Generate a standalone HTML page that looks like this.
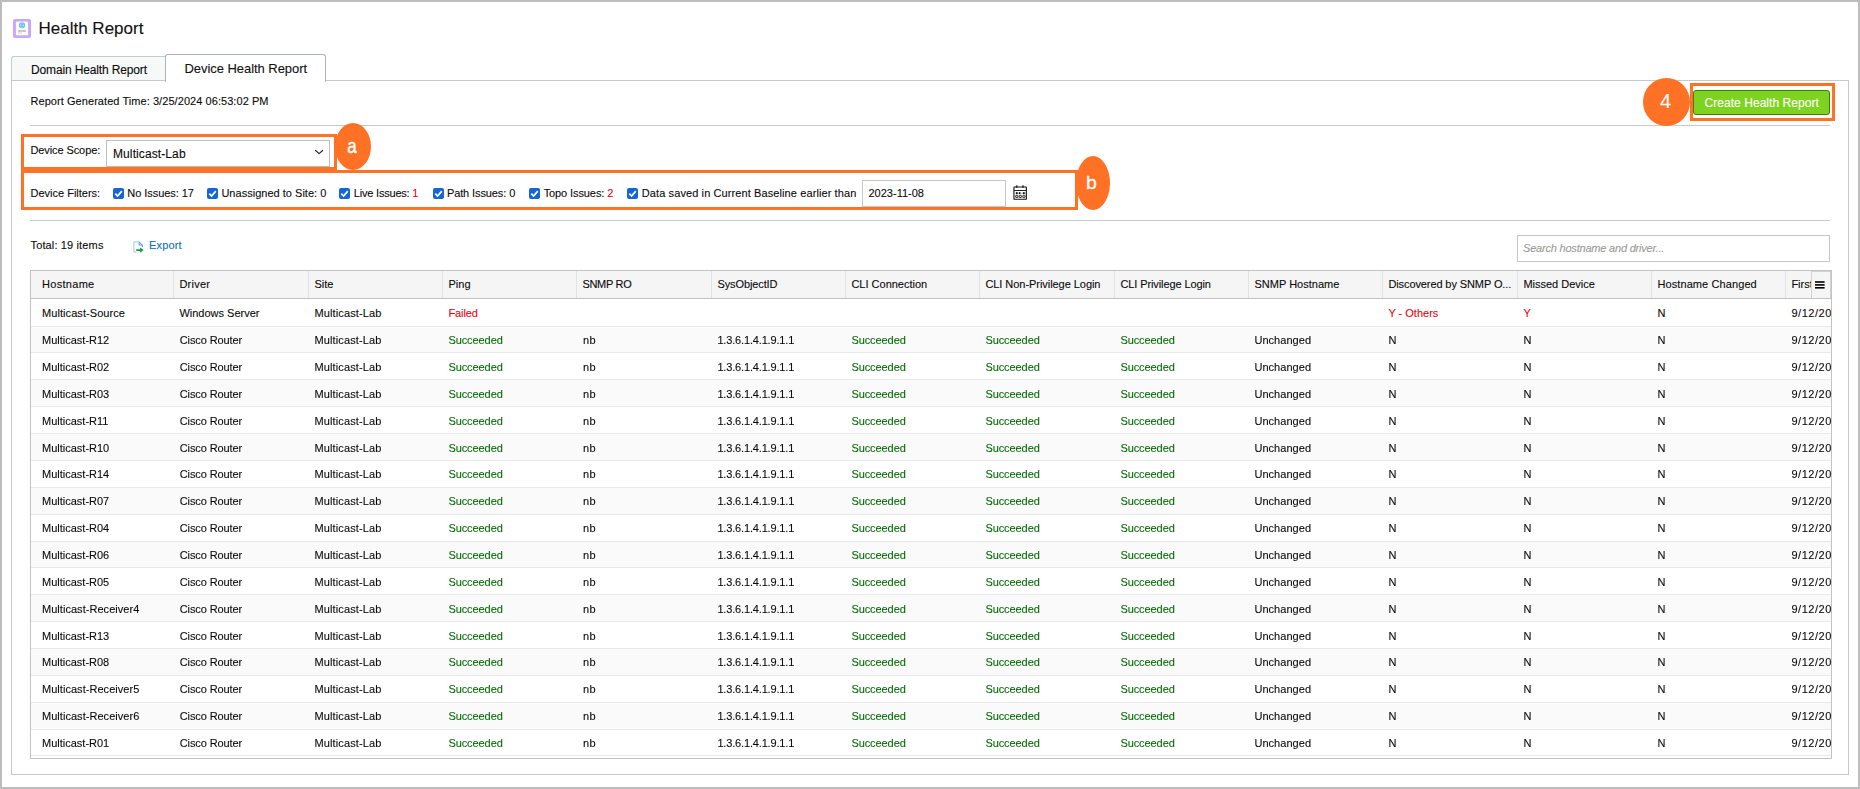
<!DOCTYPE html>
<html lang="en">
<head>
<meta charset="utf-8">
<title>Health Report</title>
<style>
*{box-sizing:border-box}
html,body{margin:0;padding:0}
body{width:1860px;height:789px;background:#fff;position:relative;overflow:hidden;font-family:"Liberation Sans", sans-serif;font-size:11px;color:#0a0a0a;line-height:1;-webkit-text-stroke:0.1px currentColor}
.a{position:absolute}
.frame{left:0;top:0;width:1860px;height:789px;border:2px solid #bdbdbd}
.t{position:absolute;white-space:nowrap;line-height:20px;height:20px}
.title{margin:0;font-weight:normal;left:38.5px;top:17.5px;font-size:17px;line-height:22px;height:22px;color:#111;letter-spacing:0px}
.tab1{left:11px;top:56px;width:155px;height:24px;border:1px solid #c6cacd;border-bottom:none;border-right:none;border-radius:3px 0 0 0;background:#f7f8f8}
.tab2{left:165px;top:54px;width:161px;height:28px;border:1px solid #adb3b8;border-bottom:none;border-radius:3px 3px 0 0;background:#fff;z-index:3}
.panel{left:11px;top:80px;width:1838px;height:695px;border:1px solid #c8c8c8;background:#fff}
.hr{height:1px;background:#c9c9c9;left:30px;width:1800px}
.obox{border:3px solid #ff7124}
.badge{background:#ff7124;border-radius:50%;color:#fff;text-align:center}
.sel{left:106px;top:140px;width:224px;height:27px;border:1px solid #bdbdbd;background:#fff}
.cb{width:11px;height:11px;border-radius:2px;background:#1565d8;top:188px}
.cb svg{position:absolute;left:0;top:0}
.btn{left:1693px;top:90px;width:137px;height:25px;background:#7ed321;border:1px solid #437d06;border-radius:3px}
.bl{color:#fff;text-align:center;z-index:6;transform-origin:50% 50%}
.gs{will-change:transform}
.inp{border:1px solid #c6c6c6;background:#fff}
.tbl{left:30px;top:270px;width:1802px;height:489px;border:1px solid #c2c2c2;overflow:hidden;background:#fff}
.th{left:0;top:0;width:1800px;height:28px;background:#f5f5f5;border-bottom:1px solid #c4c4c4}
.sep{top:0;width:1px;height:27px;background:#e2e2e2}
.row{left:0;width:1800px;border-bottom:1px solid #e9e9e9}
.row.alt{background:#fafafa}
.c{position:absolute;white-space:nowrap;font-size:11px}
.g{color:#066c06}
.r{color:#e40512}
</style>
</head>
<body>
<div class="a frame"></div>
<svg class="a" style="left:13px;top:19px" width="18" height="19" viewBox="0 0 18 19">
<rect x="0" y="0" width="18" height="18.9" rx="2" fill="#cba7f8"/>
<rect x="2.9" y="2.6" width="12.2" height="13.7" rx="1.1" fill="#fff"/>
<circle cx="9" cy="6.3" r="3.05" fill="#52b5ea"/>
<ellipse cx="9" cy="6.3" rx="1.3" ry="2.9" fill="none" stroke="#bfe4f8" stroke-width="0.7"/>
<path d="M6.1 6.3 H11.9" stroke="#bfe4f8" stroke-width="0.6"/>
<rect x="5" y="11.1" width="8" height="1.9" fill="#c6c6c6"/>
<rect x="5" y="13.5" width="3.8" height="1.1" fill="#d4d4d4"/>
</svg>
<h1 class="t title">Health Report</h1>
<div class="a panel"></div>
<div class="a tab1"></div>
<div class="a tab2"></div>
<div class="t" style="left:31px;top:59.5px;font-size:12px;letter-spacing:-0.14px">Domain Health Report</div>
<div class="t" style="left:184.5px;top:59px;font-size:13px;letter-spacing:-0.05px;z-index:4;color:#111">Device Health Report</div>
<div class="t" style="left:30.5px;top:91px;letter-spacing:0.06px">Report Generated Time: 3/25/2024 06:53:02 PM</div>
<div class="a badge" style="left:1643px;top:78px;width:47px;height:48px;z-index:5"></div>
<div class="a bl" style="left:1642px;top:78px;width:47px;height:46px;font-size:20px;line-height:46px">4</div>
<div class="a obox" style="left:1690px;top:83px;width:145px;height:38px"></div>
<div class="a btn"></div>
<div class="t" style="left:1704.5px;top:92.5px;font-size:12px;color:#fff;letter-spacing:0.05px">Create Health Report</div>
<div class="a hr" style="top:125px"></div>
<div class="a obox" style="left:21px;top:134px;width:316px;height:36px"></div>
<div class="t" style="left:30.5px;top:140px;letter-spacing:-0.1px">Device Scope:</div>
<div class="a sel"></div>
<div class="t" style="left:113px;top:143.5px;font-size:12px;letter-spacing:0.1px">Multicast-Lab</div>
<svg class="a" style="left:314px;top:149px" width="11" height="8" viewBox="0 0 11 8"><path d="M1.6 1.5 L5.1 4.6 L8.6 1.5" fill="none" stroke="#2a2a2a" stroke-width="1.2" stroke-linejoin="round" stroke-linecap="round"/></svg>
<div class="a badge" style="left:335px;top:123px;width:36px;height:47px;z-index:5"></div>
<div class="a bl" style="left:336px;top:123px;width:32px;height:47px;font-size:17px;line-height:47px;transform:scaleY(1.22);-webkit-text-stroke:0.35px #fff">a</div>
<div class="a obox" style="left:21px;top:170px;width:1057px;height:40px"></div>
<div class="t" style="left:30.5px;top:183px;">Device Filters:</div>
<div class="a cb" style="left:113px"><svg width="11" height="11" viewBox="0 0 11 11"><path d="M2.3 5.7 L4.6 8 L8.8 3.1" fill="none" stroke="#fff" stroke-width="1.7"/></svg></div>
<div class="t" style="left:127.3px;top:183px;letter-spacing:-0.05px">No Issues: 17</div>
<div class="a cb" style="left:207px"><svg width="11" height="11" viewBox="0 0 11 11"><path d="M2.3 5.7 L4.6 8 L8.8 3.1" fill="none" stroke="#fff" stroke-width="1.7"/></svg></div>
<div class="t" style="left:221.4px;top:183px;letter-spacing:0.02px">Unassigned to Site: 0</div>
<div class="a cb" style="left:339px"><svg width="11" height="11" viewBox="0 0 11 11"><path d="M2.3 5.7 L4.6 8 L8.8 3.1" fill="none" stroke="#fff" stroke-width="1.7"/></svg></div>
<div class="t" style="left:353.8px;top:183px;letter-spacing:-0.2px">Live Issues: <span class="r">1</span></div>
<div class="a cb" style="left:433px"><svg width="11" height="11" viewBox="0 0 11 11"><path d="M2.3 5.7 L4.6 8 L8.8 3.1" fill="none" stroke="#fff" stroke-width="1.7"/></svg></div>
<div class="t" style="left:446.9px;top:183px;letter-spacing:-0.1px">Path Issues: 0</div>
<div class="a cb" style="left:529px"><svg width="11" height="11" viewBox="0 0 11 11"><path d="M2.3 5.7 L4.6 8 L8.8 3.1" fill="none" stroke="#fff" stroke-width="1.7"/></svg></div>
<div class="t" style="left:543.7px;top:183px;letter-spacing:-0.1px">Topo Issues: <span class="r">2</span></div>
<div class="a cb" style="left:627px"><svg width="11" height="11" viewBox="0 0 11 11"><path d="M2.3 5.7 L4.6 8 L8.8 3.1" fill="none" stroke="#fff" stroke-width="1.7"/></svg></div>
<div class="t" style="left:641.8px;top:183px;letter-spacing:0.1px">Data saved in Current Baseline earlier than</div>
<div class="a inp" style="left:862px;top:180px;width:144px;height:27px"></div>
<div class="t" style="left:868.5px;top:183px">2023-11-08</div>
<svg class="a" style="left:1012.5px;top:184.6px" width="16" height="16" viewBox="0 0 16 16">
<rect x="0.95" y="2" width="12.4" height="12.3" rx="0.4" fill="#fff" stroke="#111" stroke-width="1.1"/>
<path d="M0.95 5.5 H13.3" stroke="#222" stroke-width="1"/>
<path d="M3.8 0.3 V2.8 M10 0.3 V2.8" stroke="#111" stroke-width="1.2"/>
<path d="M1.5 8.2 H12.8" stroke="#999" stroke-width="0.8"/>
<g fill="#111"><rect x="3" y="7.2" width="1.7" height="1.9"/><rect x="5.9" y="7.2" width="1.5" height="1.9"/><rect x="10" y="7.2" width="1.7" height="1.9"/></g>
<g fill="none" stroke="#111" stroke-width="0.9"><rect x="2.7" y="10.4" width="2.2" height="2.1" rx="0.4"/><rect x="6.1" y="10.4" width="2.2" height="2.1" rx="0.4"/><rect x="9.8" y="10.4" width="2.2" height="2.1" rx="0.4"/></g>
</svg>
<div class="a badge" style="left:1076px;top:156px;width:34px;height:54px;z-index:5"></div>
<div class="a bl" style="left:1076px;top:156px;width:31px;height:55px;font-size:18px;line-height:55px;transform:scaleX(1.08);-webkit-text-stroke:0.3px #fff">b</div>
<div class="a hr" style="top:220px"></div>
<div class="t" style="left:30.5px;top:235px;letter-spacing:0.14px">Total: 19 items</div>
<svg class="a" style="left:132.5px;top:240.5px" width="12" height="12" viewBox="0 0 12 12">
<path d="M0.9 0.9 V11 H3.4 M0.9 0.9 H6.2" fill="none" stroke="#9ccaf0" stroke-width="1"/>
<path d="M6.2 0.9 V4 H9.3 M6.2 0.9 L9.3 4 V6.2" fill="none" stroke="#4a96dc" stroke-width="1"/>
<path d="M3.2 8.3 H7 V6.4 L10.7 9.1 L7 11.8 V9.9 H3.2 Z" fill="#14a04c"/>
</svg>
<div class="t" style="left:149px;top:235px;color:#0e6fb2;letter-spacing:0.15px">Export</div>
<div class="a inp" style="left:1517px;top:235px;width:313px;height:27px"></div>
<div class="t" style="left:1523px;top:238px;font-style:italic;color:#9a9a9a;letter-spacing:-0.2px">Search hostname and driver...</div>
<div class="a tbl">
<div class="a th"></div>
<div class="c" style="left:11.0px;top:3px;line-height:20px;letter-spacing:0.3px">Hostname</div>
<div class="a sep" style="left:142px"></div><div class="c" style="left:148.4px;top:3px;line-height:20px;letter-spacing:0.25px">Driver</div>
<div class="a sep" style="left:277px"></div><div class="c" style="left:283.4px;top:3px;line-height:20px;letter-spacing:0px">Site</div>
<div class="a sep" style="left:411px"></div><div class="c" style="left:417.4px;top:3px;line-height:20px;letter-spacing:0.05px">Ping</div>
<div class="a sep" style="left:545px"></div><div class="c" style="left:551.4px;top:3px;line-height:20px;letter-spacing:-0.3px">SNMP RO</div>
<div class="a sep" style="left:680px"></div><div class="c" style="left:686.4px;top:3px;line-height:20px;letter-spacing:-0.1px">SysObjectID</div>
<div class="a sep" style="left:814px"></div><div class="c" style="left:820.4px;top:3px;line-height:20px;letter-spacing:0px">CLI Connection</div>
<div class="a sep" style="left:948px"></div><div class="c" style="left:954.4px;top:3px;line-height:20px;letter-spacing:-0.05px">CLI Non-Privilege Login</div>
<div class="a sep" style="left:1083px"></div><div class="c" style="left:1089.4px;top:3px;line-height:20px;letter-spacing:-0.1px">CLI Privilege Login</div>
<div class="a sep" style="left:1217px"></div><div class="c" style="left:1223.4px;top:3px;line-height:20px;letter-spacing:0.02px">SNMP Hostname</div>
<div class="a sep" style="left:1351px"></div><div class="c" style="left:1357.4px;top:3px;line-height:20px;letter-spacing:-0.1px">Discovered by SNMP O...</div>
<div class="a sep" style="left:1486px"></div><div class="c" style="left:1492.4px;top:3px;line-height:20px;letter-spacing:0px">Missed Device</div>
<div class="a sep" style="left:1620px"></div><div class="c" style="left:1626.4px;top:3px;line-height:20px;letter-spacing:0.1px">Hostname Changed</div>
<div class="a sep" style="left:1754px"></div><div class="c" style="left:1760.4px;top:3px;line-height:20px;letter-spacing:0px">First</div>
<div class="a row" style="top:28px;height:28px"><div class="c " style="left:11.0px;top:4px;line-height:20px;letter-spacing:0.07px">Multicast-Source</div><div class="c " style="left:148.4px;top:4px;line-height:20px;letter-spacing:0px">Windows Server</div><div class="c " style="left:283.4px;top:4px;line-height:20px;letter-spacing:0.14px">Multicast-Lab</div><div class="c r" style="left:417.4px;top:4px;line-height:20px;letter-spacing:-0.08px">Failed</div><div class="c r" style="left:1357.4px;top:4px;line-height:20px;letter-spacing:0px">Y - Others</div><div class="c r" style="left:1492.4px;top:4px;line-height:20px;letter-spacing:0px">Y</div><div class="c " style="left:1626.4px;top:4px;line-height:20px;letter-spacing:0px">N</div><div class="c " style="left:1760.4px;top:4px;line-height:20px;letter-spacing:0.55px">9/12/2023</div></div>
<div class="a row alt gs" style="top:56px;height:26px"><div class="c " style="left:11.0px;top:3px;line-height:20px;letter-spacing:0px">Multicast-R12</div><div class="c " style="left:148.7px;top:3px;line-height:20px;letter-spacing:-0.1px">Cisco Router</div><div class="c " style="left:283.4px;top:3px;line-height:20px;letter-spacing:0.14px">Multicast-Lab</div><div class="c g" style="left:417.4px;top:3px;line-height:20px;letter-spacing:-0.08px">Succeeded</div><div class="c " style="left:552.1px;top:3px;line-height:20px;letter-spacing:0.4px">nb</div><div class="c " style="left:686.4px;top:3px;line-height:20px;letter-spacing:-0.16px">1.3.6.1.4.1.9.1.1</div><div class="c g" style="left:820.4px;top:3px;line-height:20px;letter-spacing:-0.08px">Succeeded</div><div class="c g" style="left:954.4px;top:3px;line-height:20px;letter-spacing:-0.08px">Succeeded</div><div class="c g" style="left:1089.4px;top:3px;line-height:20px;letter-spacing:-0.08px">Succeeded</div><div class="c " style="left:1223.4px;top:3px;line-height:20px;letter-spacing:0.05px">Unchanged</div><div class="c " style="left:1357.4px;top:3px;line-height:20px;letter-spacing:0px">N</div><div class="c " style="left:1492.4px;top:3px;line-height:20px;letter-spacing:0px">N</div><div class="c " style="left:1626.4px;top:3px;line-height:20px;letter-spacing:0px">N</div><div class="c " style="left:1760.4px;top:3px;line-height:20px;letter-spacing:0.55px">9/12/2023</div></div>
<div class="a row gs" style="top:82px;height:27px"><div class="c " style="left:11.0px;top:4px;line-height:20px;letter-spacing:0px">Multicast-R02</div><div class="c " style="left:148.7px;top:4px;line-height:20px;letter-spacing:-0.1px">Cisco Router</div><div class="c " style="left:283.4px;top:4px;line-height:20px;letter-spacing:0.14px">Multicast-Lab</div><div class="c g" style="left:417.4px;top:4px;line-height:20px;letter-spacing:-0.08px">Succeeded</div><div class="c " style="left:552.1px;top:4px;line-height:20px;letter-spacing:0.4px">nb</div><div class="c " style="left:686.4px;top:4px;line-height:20px;letter-spacing:-0.16px">1.3.6.1.4.1.9.1.1</div><div class="c g" style="left:820.4px;top:4px;line-height:20px;letter-spacing:-0.08px">Succeeded</div><div class="c g" style="left:954.4px;top:4px;line-height:20px;letter-spacing:-0.08px">Succeeded</div><div class="c g" style="left:1089.4px;top:4px;line-height:20px;letter-spacing:-0.08px">Succeeded</div><div class="c " style="left:1223.4px;top:4px;line-height:20px;letter-spacing:0.05px">Unchanged</div><div class="c " style="left:1357.4px;top:4px;line-height:20px;letter-spacing:0px">N</div><div class="c " style="left:1492.4px;top:4px;line-height:20px;letter-spacing:0px">N</div><div class="c " style="left:1626.4px;top:4px;line-height:20px;letter-spacing:0px">N</div><div class="c " style="left:1760.4px;top:4px;line-height:20px;letter-spacing:0.55px">9/12/2023</div></div>
<div class="a row alt gs" style="top:109px;height:27px"><div class="c " style="left:11.0px;top:4px;line-height:20px;letter-spacing:0px">Multicast-R03</div><div class="c " style="left:148.7px;top:4px;line-height:20px;letter-spacing:-0.1px">Cisco Router</div><div class="c " style="left:283.4px;top:4px;line-height:20px;letter-spacing:0.14px">Multicast-Lab</div><div class="c g" style="left:417.4px;top:4px;line-height:20px;letter-spacing:-0.08px">Succeeded</div><div class="c " style="left:552.1px;top:4px;line-height:20px;letter-spacing:0.4px">nb</div><div class="c " style="left:686.4px;top:4px;line-height:20px;letter-spacing:-0.16px">1.3.6.1.4.1.9.1.1</div><div class="c g" style="left:820.4px;top:4px;line-height:20px;letter-spacing:-0.08px">Succeeded</div><div class="c g" style="left:954.4px;top:4px;line-height:20px;letter-spacing:-0.08px">Succeeded</div><div class="c g" style="left:1089.4px;top:4px;line-height:20px;letter-spacing:-0.08px">Succeeded</div><div class="c " style="left:1223.4px;top:4px;line-height:20px;letter-spacing:0.05px">Unchanged</div><div class="c " style="left:1357.4px;top:4px;line-height:20px;letter-spacing:0px">N</div><div class="c " style="left:1492.4px;top:4px;line-height:20px;letter-spacing:0px">N</div><div class="c " style="left:1626.4px;top:4px;line-height:20px;letter-spacing:0px">N</div><div class="c " style="left:1760.4px;top:4px;line-height:20px;letter-spacing:0.55px">9/12/2023</div></div>
<div class="a row gs" style="top:136px;height:27px"><div class="c " style="left:11.0px;top:4px;line-height:20px;letter-spacing:0px">Multicast-R11</div><div class="c " style="left:148.7px;top:4px;line-height:20px;letter-spacing:-0.1px">Cisco Router</div><div class="c " style="left:283.4px;top:4px;line-height:20px;letter-spacing:0.14px">Multicast-Lab</div><div class="c g" style="left:417.4px;top:4px;line-height:20px;letter-spacing:-0.08px">Succeeded</div><div class="c " style="left:552.1px;top:4px;line-height:20px;letter-spacing:0.4px">nb</div><div class="c " style="left:686.4px;top:4px;line-height:20px;letter-spacing:-0.16px">1.3.6.1.4.1.9.1.1</div><div class="c g" style="left:820.4px;top:4px;line-height:20px;letter-spacing:-0.08px">Succeeded</div><div class="c g" style="left:954.4px;top:4px;line-height:20px;letter-spacing:-0.08px">Succeeded</div><div class="c g" style="left:1089.4px;top:4px;line-height:20px;letter-spacing:-0.08px">Succeeded</div><div class="c " style="left:1223.4px;top:4px;line-height:20px;letter-spacing:0.05px">Unchanged</div><div class="c " style="left:1357.4px;top:4px;line-height:20px;letter-spacing:0px">N</div><div class="c " style="left:1492.4px;top:4px;line-height:20px;letter-spacing:0px">N</div><div class="c " style="left:1626.4px;top:4px;line-height:20px;letter-spacing:0px">N</div><div class="c " style="left:1760.4px;top:4px;line-height:20px;letter-spacing:0.55px">9/12/2023</div></div>
<div class="a row alt gs" style="top:163px;height:27px"><div class="c " style="left:11.0px;top:4px;line-height:20px;letter-spacing:0px">Multicast-R10</div><div class="c " style="left:148.7px;top:4px;line-height:20px;letter-spacing:-0.1px">Cisco Router</div><div class="c " style="left:283.4px;top:4px;line-height:20px;letter-spacing:0.14px">Multicast-Lab</div><div class="c g" style="left:417.4px;top:4px;line-height:20px;letter-spacing:-0.08px">Succeeded</div><div class="c " style="left:552.1px;top:4px;line-height:20px;letter-spacing:0.4px">nb</div><div class="c " style="left:686.4px;top:4px;line-height:20px;letter-spacing:-0.16px">1.3.6.1.4.1.9.1.1</div><div class="c g" style="left:820.4px;top:4px;line-height:20px;letter-spacing:-0.08px">Succeeded</div><div class="c g" style="left:954.4px;top:4px;line-height:20px;letter-spacing:-0.08px">Succeeded</div><div class="c g" style="left:1089.4px;top:4px;line-height:20px;letter-spacing:-0.08px">Succeeded</div><div class="c " style="left:1223.4px;top:4px;line-height:20px;letter-spacing:0.05px">Unchanged</div><div class="c " style="left:1357.4px;top:4px;line-height:20px;letter-spacing:0px">N</div><div class="c " style="left:1492.4px;top:4px;line-height:20px;letter-spacing:0px">N</div><div class="c " style="left:1626.4px;top:4px;line-height:20px;letter-spacing:0px">N</div><div class="c " style="left:1760.4px;top:4px;line-height:20px;letter-spacing:0.55px">9/12/2023</div></div>
<div class="a row gs" style="top:190px;height:27px"><div class="c " style="left:11.0px;top:3px;line-height:20px;letter-spacing:0px">Multicast-R14</div><div class="c " style="left:148.7px;top:3px;line-height:20px;letter-spacing:-0.1px">Cisco Router</div><div class="c " style="left:283.4px;top:3px;line-height:20px;letter-spacing:0.14px">Multicast-Lab</div><div class="c g" style="left:417.4px;top:3px;line-height:20px;letter-spacing:-0.08px">Succeeded</div><div class="c " style="left:552.1px;top:3px;line-height:20px;letter-spacing:0.4px">nb</div><div class="c " style="left:686.4px;top:3px;line-height:20px;letter-spacing:-0.16px">1.3.6.1.4.1.9.1.1</div><div class="c g" style="left:820.4px;top:3px;line-height:20px;letter-spacing:-0.08px">Succeeded</div><div class="c g" style="left:954.4px;top:3px;line-height:20px;letter-spacing:-0.08px">Succeeded</div><div class="c g" style="left:1089.4px;top:3px;line-height:20px;letter-spacing:-0.08px">Succeeded</div><div class="c " style="left:1223.4px;top:3px;line-height:20px;letter-spacing:0.05px">Unchanged</div><div class="c " style="left:1357.4px;top:3px;line-height:20px;letter-spacing:0px">N</div><div class="c " style="left:1492.4px;top:3px;line-height:20px;letter-spacing:0px">N</div><div class="c " style="left:1626.4px;top:3px;line-height:20px;letter-spacing:0px">N</div><div class="c " style="left:1760.4px;top:3px;line-height:20px;letter-spacing:0.55px">9/12/2023</div></div>
<div class="a row alt gs" style="top:217px;height:27px"><div class="c " style="left:11.0px;top:3px;line-height:20px;letter-spacing:0px">Multicast-R07</div><div class="c " style="left:148.7px;top:3px;line-height:20px;letter-spacing:-0.1px">Cisco Router</div><div class="c " style="left:283.4px;top:3px;line-height:20px;letter-spacing:0.14px">Multicast-Lab</div><div class="c g" style="left:417.4px;top:3px;line-height:20px;letter-spacing:-0.08px">Succeeded</div><div class="c " style="left:552.1px;top:3px;line-height:20px;letter-spacing:0.4px">nb</div><div class="c " style="left:686.4px;top:3px;line-height:20px;letter-spacing:-0.16px">1.3.6.1.4.1.9.1.1</div><div class="c g" style="left:820.4px;top:3px;line-height:20px;letter-spacing:-0.08px">Succeeded</div><div class="c g" style="left:954.4px;top:3px;line-height:20px;letter-spacing:-0.08px">Succeeded</div><div class="c g" style="left:1089.4px;top:3px;line-height:20px;letter-spacing:-0.08px">Succeeded</div><div class="c " style="left:1223.4px;top:3px;line-height:20px;letter-spacing:0.05px">Unchanged</div><div class="c " style="left:1357.4px;top:3px;line-height:20px;letter-spacing:0px">N</div><div class="c " style="left:1492.4px;top:3px;line-height:20px;letter-spacing:0px">N</div><div class="c " style="left:1626.4px;top:3px;line-height:20px;letter-spacing:0px">N</div><div class="c " style="left:1760.4px;top:3px;line-height:20px;letter-spacing:0.55px">9/12/2023</div></div>
<div class="a row gs" style="top:244px;height:27px"><div class="c " style="left:11.0px;top:3px;line-height:20px;letter-spacing:0px">Multicast-R04</div><div class="c " style="left:148.7px;top:3px;line-height:20px;letter-spacing:-0.1px">Cisco Router</div><div class="c " style="left:283.4px;top:3px;line-height:20px;letter-spacing:0.14px">Multicast-Lab</div><div class="c g" style="left:417.4px;top:3px;line-height:20px;letter-spacing:-0.08px">Succeeded</div><div class="c " style="left:552.1px;top:3px;line-height:20px;letter-spacing:0.4px">nb</div><div class="c " style="left:686.4px;top:3px;line-height:20px;letter-spacing:-0.16px">1.3.6.1.4.1.9.1.1</div><div class="c g" style="left:820.4px;top:3px;line-height:20px;letter-spacing:-0.08px">Succeeded</div><div class="c g" style="left:954.4px;top:3px;line-height:20px;letter-spacing:-0.08px">Succeeded</div><div class="c g" style="left:1089.4px;top:3px;line-height:20px;letter-spacing:-0.08px">Succeeded</div><div class="c " style="left:1223.4px;top:3px;line-height:20px;letter-spacing:0.05px">Unchanged</div><div class="c " style="left:1357.4px;top:3px;line-height:20px;letter-spacing:0px">N</div><div class="c " style="left:1492.4px;top:3px;line-height:20px;letter-spacing:0px">N</div><div class="c " style="left:1626.4px;top:3px;line-height:20px;letter-spacing:0px">N</div><div class="c " style="left:1760.4px;top:3px;line-height:20px;letter-spacing:0.55px">9/12/2023</div></div>
<div class="a row alt gs" style="top:271px;height:26px"><div class="c " style="left:11.0px;top:3px;line-height:20px;letter-spacing:0px">Multicast-R06</div><div class="c " style="left:148.7px;top:3px;line-height:20px;letter-spacing:-0.1px">Cisco Router</div><div class="c " style="left:283.4px;top:3px;line-height:20px;letter-spacing:0.14px">Multicast-Lab</div><div class="c g" style="left:417.4px;top:3px;line-height:20px;letter-spacing:-0.08px">Succeeded</div><div class="c " style="left:552.1px;top:3px;line-height:20px;letter-spacing:0.4px">nb</div><div class="c " style="left:686.4px;top:3px;line-height:20px;letter-spacing:-0.16px">1.3.6.1.4.1.9.1.1</div><div class="c g" style="left:820.4px;top:3px;line-height:20px;letter-spacing:-0.08px">Succeeded</div><div class="c g" style="left:954.4px;top:3px;line-height:20px;letter-spacing:-0.08px">Succeeded</div><div class="c g" style="left:1089.4px;top:3px;line-height:20px;letter-spacing:-0.08px">Succeeded</div><div class="c " style="left:1223.4px;top:3px;line-height:20px;letter-spacing:0.05px">Unchanged</div><div class="c " style="left:1357.4px;top:3px;line-height:20px;letter-spacing:0px">N</div><div class="c " style="left:1492.4px;top:3px;line-height:20px;letter-spacing:0px">N</div><div class="c " style="left:1626.4px;top:3px;line-height:20px;letter-spacing:0px">N</div><div class="c " style="left:1760.4px;top:3px;line-height:20px;letter-spacing:0.55px">9/12/2023</div></div>
<div class="a row gs" style="top:297px;height:27px"><div class="c " style="left:11.0px;top:4px;line-height:20px;letter-spacing:0px">Multicast-R05</div><div class="c " style="left:148.7px;top:4px;line-height:20px;letter-spacing:-0.1px">Cisco Router</div><div class="c " style="left:283.4px;top:4px;line-height:20px;letter-spacing:0.14px">Multicast-Lab</div><div class="c g" style="left:417.4px;top:4px;line-height:20px;letter-spacing:-0.08px">Succeeded</div><div class="c " style="left:552.1px;top:4px;line-height:20px;letter-spacing:0.4px">nb</div><div class="c " style="left:686.4px;top:4px;line-height:20px;letter-spacing:-0.16px">1.3.6.1.4.1.9.1.1</div><div class="c g" style="left:820.4px;top:4px;line-height:20px;letter-spacing:-0.08px">Succeeded</div><div class="c g" style="left:954.4px;top:4px;line-height:20px;letter-spacing:-0.08px">Succeeded</div><div class="c g" style="left:1089.4px;top:4px;line-height:20px;letter-spacing:-0.08px">Succeeded</div><div class="c " style="left:1223.4px;top:4px;line-height:20px;letter-spacing:0.05px">Unchanged</div><div class="c " style="left:1357.4px;top:4px;line-height:20px;letter-spacing:0px">N</div><div class="c " style="left:1492.4px;top:4px;line-height:20px;letter-spacing:0px">N</div><div class="c " style="left:1626.4px;top:4px;line-height:20px;letter-spacing:0px">N</div><div class="c " style="left:1760.4px;top:4px;line-height:20px;letter-spacing:0.55px">9/12/2023</div></div>
<div class="a row alt gs" style="top:324px;height:27px"><div class="c " style="left:11.0px;top:4px;line-height:20px;letter-spacing:0.04px">Multicast-Receiver4</div><div class="c " style="left:148.7px;top:4px;line-height:20px;letter-spacing:-0.1px">Cisco Router</div><div class="c " style="left:283.4px;top:4px;line-height:20px;letter-spacing:0.14px">Multicast-Lab</div><div class="c g" style="left:417.4px;top:4px;line-height:20px;letter-spacing:-0.08px">Succeeded</div><div class="c " style="left:552.1px;top:4px;line-height:20px;letter-spacing:0.4px">nb</div><div class="c " style="left:686.4px;top:4px;line-height:20px;letter-spacing:-0.16px">1.3.6.1.4.1.9.1.1</div><div class="c g" style="left:820.4px;top:4px;line-height:20px;letter-spacing:-0.08px">Succeeded</div><div class="c g" style="left:954.4px;top:4px;line-height:20px;letter-spacing:-0.08px">Succeeded</div><div class="c g" style="left:1089.4px;top:4px;line-height:20px;letter-spacing:-0.08px">Succeeded</div><div class="c " style="left:1223.4px;top:4px;line-height:20px;letter-spacing:0.05px">Unchanged</div><div class="c " style="left:1357.4px;top:4px;line-height:20px;letter-spacing:0px">N</div><div class="c " style="left:1492.4px;top:4px;line-height:20px;letter-spacing:0px">N</div><div class="c " style="left:1626.4px;top:4px;line-height:20px;letter-spacing:0px">N</div><div class="c " style="left:1760.4px;top:4px;line-height:20px;letter-spacing:0.55px">9/12/2023</div></div>
<div class="a row gs" style="top:351px;height:27px"><div class="c " style="left:11.0px;top:4px;line-height:20px;letter-spacing:0px">Multicast-R13</div><div class="c " style="left:148.7px;top:4px;line-height:20px;letter-spacing:-0.1px">Cisco Router</div><div class="c " style="left:283.4px;top:4px;line-height:20px;letter-spacing:0.14px">Multicast-Lab</div><div class="c g" style="left:417.4px;top:4px;line-height:20px;letter-spacing:-0.08px">Succeeded</div><div class="c " style="left:552.1px;top:4px;line-height:20px;letter-spacing:0.4px">nb</div><div class="c " style="left:686.4px;top:4px;line-height:20px;letter-spacing:-0.16px">1.3.6.1.4.1.9.1.1</div><div class="c g" style="left:820.4px;top:4px;line-height:20px;letter-spacing:-0.08px">Succeeded</div><div class="c g" style="left:954.4px;top:4px;line-height:20px;letter-spacing:-0.08px">Succeeded</div><div class="c g" style="left:1089.4px;top:4px;line-height:20px;letter-spacing:-0.08px">Succeeded</div><div class="c " style="left:1223.4px;top:4px;line-height:20px;letter-spacing:0.05px">Unchanged</div><div class="c " style="left:1357.4px;top:4px;line-height:20px;letter-spacing:0px">N</div><div class="c " style="left:1492.4px;top:4px;line-height:20px;letter-spacing:0px">N</div><div class="c " style="left:1626.4px;top:4px;line-height:20px;letter-spacing:0px">N</div><div class="c " style="left:1760.4px;top:4px;line-height:20px;letter-spacing:0.55px">9/12/2023</div></div>
<div class="a row alt gs" style="top:378px;height:27px"><div class="c " style="left:11.0px;top:3px;line-height:20px;letter-spacing:0px">Multicast-R08</div><div class="c " style="left:148.7px;top:3px;line-height:20px;letter-spacing:-0.1px">Cisco Router</div><div class="c " style="left:283.4px;top:3px;line-height:20px;letter-spacing:0.14px">Multicast-Lab</div><div class="c g" style="left:417.4px;top:3px;line-height:20px;letter-spacing:-0.08px">Succeeded</div><div class="c " style="left:552.1px;top:3px;line-height:20px;letter-spacing:0.4px">nb</div><div class="c " style="left:686.4px;top:3px;line-height:20px;letter-spacing:-0.16px">1.3.6.1.4.1.9.1.1</div><div class="c g" style="left:820.4px;top:3px;line-height:20px;letter-spacing:-0.08px">Succeeded</div><div class="c g" style="left:954.4px;top:3px;line-height:20px;letter-spacing:-0.08px">Succeeded</div><div class="c g" style="left:1089.4px;top:3px;line-height:20px;letter-spacing:-0.08px">Succeeded</div><div class="c " style="left:1223.4px;top:3px;line-height:20px;letter-spacing:0.05px">Unchanged</div><div class="c " style="left:1357.4px;top:3px;line-height:20px;letter-spacing:0px">N</div><div class="c " style="left:1492.4px;top:3px;line-height:20px;letter-spacing:0px">N</div><div class="c " style="left:1626.4px;top:3px;line-height:20px;letter-spacing:0px">N</div><div class="c " style="left:1760.4px;top:3px;line-height:20px;letter-spacing:0.55px">9/12/2023</div></div>
<div class="a row gs" style="top:405px;height:27px"><div class="c " style="left:11.0px;top:3px;line-height:20px;letter-spacing:0.04px">Multicast-Receiver5</div><div class="c " style="left:148.7px;top:3px;line-height:20px;letter-spacing:-0.1px">Cisco Router</div><div class="c " style="left:283.4px;top:3px;line-height:20px;letter-spacing:0.14px">Multicast-Lab</div><div class="c g" style="left:417.4px;top:3px;line-height:20px;letter-spacing:-0.08px">Succeeded</div><div class="c " style="left:552.1px;top:3px;line-height:20px;letter-spacing:0.4px">nb</div><div class="c " style="left:686.4px;top:3px;line-height:20px;letter-spacing:-0.16px">1.3.6.1.4.1.9.1.1</div><div class="c g" style="left:820.4px;top:3px;line-height:20px;letter-spacing:-0.08px">Succeeded</div><div class="c g" style="left:954.4px;top:3px;line-height:20px;letter-spacing:-0.08px">Succeeded</div><div class="c g" style="left:1089.4px;top:3px;line-height:20px;letter-spacing:-0.08px">Succeeded</div><div class="c " style="left:1223.4px;top:3px;line-height:20px;letter-spacing:0.05px">Unchanged</div><div class="c " style="left:1357.4px;top:3px;line-height:20px;letter-spacing:0px">N</div><div class="c " style="left:1492.4px;top:3px;line-height:20px;letter-spacing:0px">N</div><div class="c " style="left:1626.4px;top:3px;line-height:20px;letter-spacing:0px">N</div><div class="c " style="left:1760.4px;top:3px;line-height:20px;letter-spacing:0.55px">9/12/2023</div></div>
<div class="a row alt gs" style="top:432px;height:27px"><div class="c " style="left:11.0px;top:3px;line-height:20px;letter-spacing:0.04px">Multicast-Receiver6</div><div class="c " style="left:148.7px;top:3px;line-height:20px;letter-spacing:-0.1px">Cisco Router</div><div class="c " style="left:283.4px;top:3px;line-height:20px;letter-spacing:0.14px">Multicast-Lab</div><div class="c g" style="left:417.4px;top:3px;line-height:20px;letter-spacing:-0.08px">Succeeded</div><div class="c " style="left:552.1px;top:3px;line-height:20px;letter-spacing:0.4px">nb</div><div class="c " style="left:686.4px;top:3px;line-height:20px;letter-spacing:-0.16px">1.3.6.1.4.1.9.1.1</div><div class="c g" style="left:820.4px;top:3px;line-height:20px;letter-spacing:-0.08px">Succeeded</div><div class="c g" style="left:954.4px;top:3px;line-height:20px;letter-spacing:-0.08px">Succeeded</div><div class="c g" style="left:1089.4px;top:3px;line-height:20px;letter-spacing:-0.08px">Succeeded</div><div class="c " style="left:1223.4px;top:3px;line-height:20px;letter-spacing:0.05px">Unchanged</div><div class="c " style="left:1357.4px;top:3px;line-height:20px;letter-spacing:0px">N</div><div class="c " style="left:1492.4px;top:3px;line-height:20px;letter-spacing:0px">N</div><div class="c " style="left:1626.4px;top:3px;line-height:20px;letter-spacing:0px">N</div><div class="c " style="left:1760.4px;top:3px;line-height:20px;letter-spacing:0.55px">9/12/2023</div></div>
<div class="a row gs" style="top:459px;height:26px"><div class="c " style="left:11.0px;top:3px;line-height:20px;letter-spacing:0px">Multicast-R01</div><div class="c " style="left:148.7px;top:3px;line-height:20px;letter-spacing:-0.1px">Cisco Router</div><div class="c " style="left:283.4px;top:3px;line-height:20px;letter-spacing:0.14px">Multicast-Lab</div><div class="c g" style="left:417.4px;top:3px;line-height:20px;letter-spacing:-0.08px">Succeeded</div><div class="c " style="left:552.1px;top:3px;line-height:20px;letter-spacing:0.4px">nb</div><div class="c " style="left:686.4px;top:3px;line-height:20px;letter-spacing:-0.16px">1.3.6.1.4.1.9.1.1</div><div class="c g" style="left:820.4px;top:3px;line-height:20px;letter-spacing:-0.08px">Succeeded</div><div class="c g" style="left:954.4px;top:3px;line-height:20px;letter-spacing:-0.08px">Succeeded</div><div class="c g" style="left:1089.4px;top:3px;line-height:20px;letter-spacing:-0.08px">Succeeded</div><div class="c " style="left:1223.4px;top:3px;line-height:20px;letter-spacing:0.05px">Unchanged</div><div class="c " style="left:1357.4px;top:3px;line-height:20px;letter-spacing:0px">N</div><div class="c " style="left:1492.4px;top:3px;line-height:20px;letter-spacing:0px">N</div><div class="c " style="left:1626.4px;top:3px;line-height:20px;letter-spacing:0px">N</div><div class="c " style="left:1760.4px;top:3px;line-height:20px;letter-spacing:0.55px">9/12/2023</div></div>
<div class="a" style="left:1780px;top:0;width:20px;height:27px;background:#f5f5f5;border:1px solid #d2d2d2;border-bottom:none"></div>
<svg class="a" style="left:1784px;top:10px" width="10" height="8" viewBox="0 0 10 8"><rect x="0" y="0.2" width="9.6" height="1.6" fill="#000"/><rect x="0" y="3.1" width="9.6" height="1.6" fill="#000"/><rect x="0" y="6" width="9.6" height="1.6" fill="#000"/></svg>
</div>
</body>
</html>
